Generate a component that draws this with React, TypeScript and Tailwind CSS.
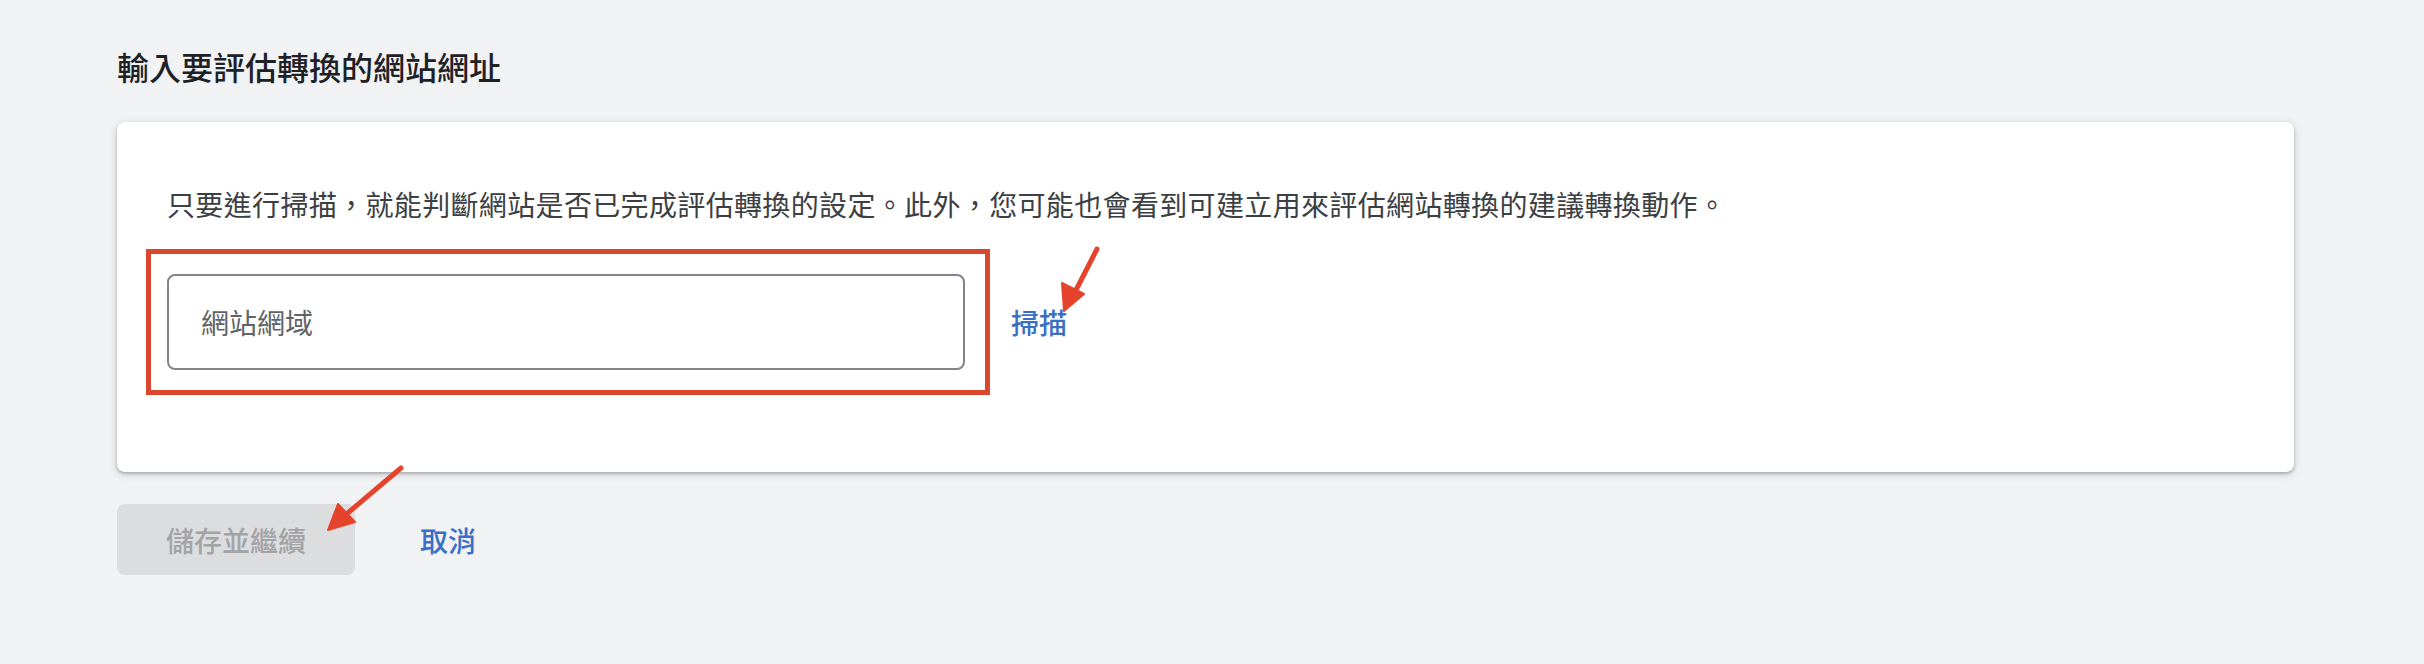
const font = { fontFamily: '"Noto Sans CJK TC", "Noto Sans", sans-serif' };

function Arrows() {
  // annotation arrows drawn over the page
  return (
    <svg
      className="pointer-events-none absolute left-0 top-0"
      width="2424"
      height="664"
      viewBox="0 0 2424 664"
    >
      <g fill="#e5432b" stroke="#e5432b" strokeLinecap="round">
        <line x1="1097" y1="249" x2="1075" y2="292" strokeWidth="5" />
        <polygon points="1064,311 1062,283 1084,294" strokeWidth="2" strokeLinejoin="round" />
        <line x1="401" y1="468" x2="343" y2="517" strokeWidth="5" />
        <polygon points="328,530 338,504 355,522" strokeWidth="2" strokeLinejoin="round" />
      </g>
    </svg>
  );
}

export default function App() {
  return (
    <div
      className="relative min-h-[664px] w-[2424px] bg-[#f1f2f4] pl-[117px] pr-[130px] pt-[46px]"
      style={font}
    >
      <h1 className="text-[32px] leading-[40px] font-medium text-[#202124]">
        輸入要評估轉換的網站網址
      </h1>

      <div className="mt-[36px] rounded-[8px] bg-white px-[50px] pt-[62px] pb-[102px] shadow-[0_2px_3px_rgba(60,64,67,0.3),0_2px_6px_2px_rgba(60,64,67,0.12)]">
        <p className="text-[28px] leading-[40px] tracking-[0.35px] text-[#3c4043]">
          只要進行掃描，就能判斷網站是否已完成評估轉換的設定。此外，您可能也會看到可建立用來評估網站轉換的建議轉換動作。
        </p>
        <div className="mt-[50px] flex items-center gap-[46px]">
          <div className="relative">
            <input
              className="h-[96px] w-[798px] rounded-[8px] border-2 border-[#80868b] pl-[32px] text-[28px] text-[#202124] outline-none placeholder:text-[#5f6368]"
              style={font}
              placeholder="網站網域"
            />
            <div className="pointer-events-none absolute -left-[21px] -right-[25px] -top-[25px] -bottom-[25px] border-[5px] border-[#d9472f]" />
          </div>
          <button className="text-[28px] font-medium leading-[40px] text-[#3a6fc6]">
            掃描
          </button>
        </div>
      </div>

      <div className="mt-[32px] flex items-center gap-[65px]">
        <button
          disabled
          className="h-[71px] w-[238px] rounded-[8px] bg-[#dcdddf] text-[28px] font-medium text-[#a3a3a5]"
        >
          儲存並繼續
        </button>
        <button className="text-[28px] font-medium text-[#3a6fc6]">取消</button>
      </div>

      <Arrows />
    </div>
  );
}
